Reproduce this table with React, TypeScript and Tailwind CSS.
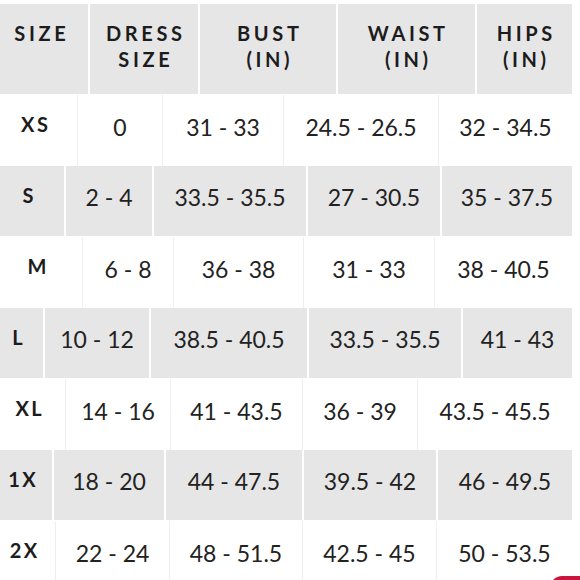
import React from "react";

type Row = { label: string; values: string[]; widths: number[]; gray: boolean };

const rows: Row[] = [
  { label: "XS", values: ["0", "31 - 33", "24.5 - 26.5", "32 - 34.5"], widths: [85, 84, 120, 154, 133], gray: false },
  { label: "S", values: ["2 - 4", "33.5 - 35.5", "27 - 30.5", "35 - 37.5"], widths: [72, 86, 152, 132, 130], gray: true },
  { label: "M", values: ["6 - 8", "36 - 38", "31 - 33", "38 - 40.5"], widths: [90, 90, 129, 130, 137], gray: false },
  { label: "L", values: ["10 - 12", "38.5 - 40.5", "33.5 - 35.5", "41 - 43"], widths: [51, 104, 156, 152, 109], gray: true },
  { label: "XL", values: ["14 - 16", "41 - 43.5", "36 - 39", "43.5 - 45.5"], widths: [73, 104, 131, 114, 154], gray: false },
  { label: "1X", values: ["18 - 20", "44 - 47.5", "39.5 - 42", "46 - 49.5"], widths: [60, 110, 136, 132, 134], gray: true },
  { label: "2X", values: ["22 - 24", "48 - 51.5", "42.5 - 45", "50 - 53.5"], widths: [63, 113, 132, 133, 135], gray: false },
];

const headers: string[][] = [["SIZE"], ["DRESS", "SIZE"], ["BUST", "(IN)"], ["WAIST", "(IN)"], ["HIPS", "(IN)"]];
const headerWidths = [96, 108, 136, 137, 95];

export default function App() {
  return (
    <div
      className="relative w-[580px] h-[580px] overflow-hidden bg-white text-[#1c1c1c]"
      style={{ fontFamily: "Lato, 'Noto Sans', sans-serif" }}
    >
      <div className="-ml-2 w-[580px] pt-[4px]">
        <div className="flex gap-[2px] h-[90px] mb-px">
          {headers.map((lines, i) => (
            <div
              key={i}
              className="shrink-0 bg-[#e6e6e6] flex flex-col items-center pt-[16px]"
              style={{ width: headerWidths[i] }}
            >
              {lines.map((l, j) => (
                <span key={j} className="block text-[20px] leading-[26px] font-bold tracking-[0.18em] -mr-[0.18em]">
                  {l}
                </span>
              ))}
            </div>
          ))}
        </div>
        {rows.map((r, ri) => {
          const cells = [r.label, ...r.values];
          return (
            <div
              key={ri}
              className={
                r.gray
                  ? "flex gap-[2px] h-[70px] mb-px bg-white"
                  : "flex gap-px h-[71px] bg-[#efefef]"
              }
            >
              {cells.map((c, ci) => (
                <div
                  key={ci}
                  className={
                    (r.gray ? "bg-[#e6e6e6] " : "bg-white ") +
                    "shrink-0 flex items-center justify-center " +
                    (ci === 0 ? "pb-[13px]" : "pb-[7px]")
                  }
                  style={{ width: r.widths[ci] }}
                >
                  {ci === 0 ? (
                    <span className="text-[20px] leading-none font-bold tracking-[0.12em] -mr-[0.12em]">{c}</span>
                  ) : (
                    <span className="text-[23px] leading-none text-[#222]">{c}</span>
                  )}
                </div>
              ))}
            </div>
          );
        })}
      </div>
      <div className="absolute left-[550px] top-[576px] w-[50px] h-[20px] rounded-tl-[12px] bg-[#c8163e]" />
    </div>
  );
}
